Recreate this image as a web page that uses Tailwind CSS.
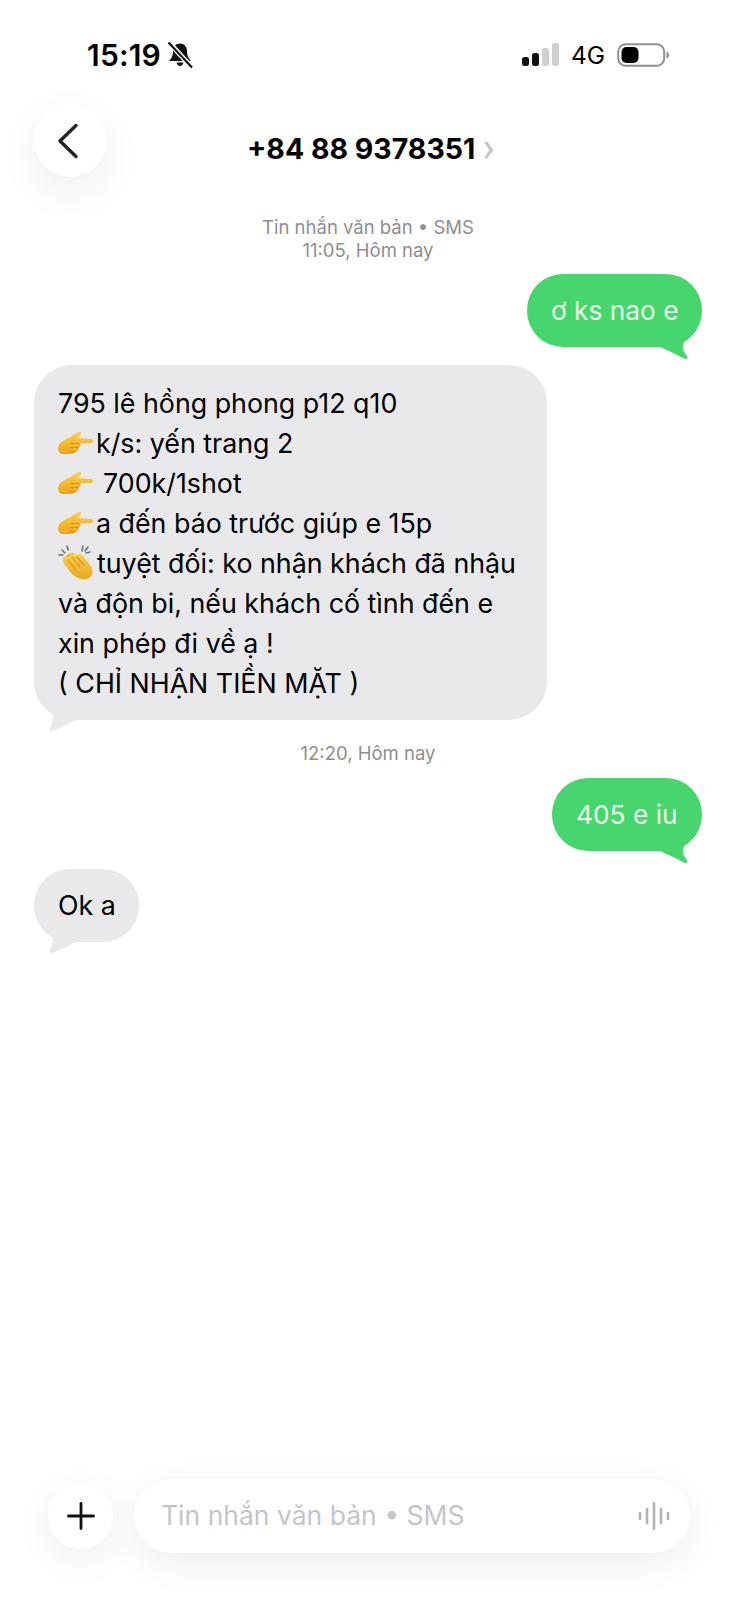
<!DOCTYPE html>
<html lang="vi">
<head>
<meta charset="utf-8">
<script src="https://cdn.jsdelivr.net/npm/@tailwindcss/browser@4"></script>
</head>
<body class="bg-white">
<div class="w-[736px] h-[1600px] flex flex-col overflow-hidden bg-white text-black font-['Inter','Liberation_Sans',sans-serif]">

  <!-- status bar -->
  <div class="h-[104px] pt-[38px] pl-[87px] pr-[67px] flex items-start justify-between shrink-0">
    <div class="flex items-center h-[34px] gap-[6px]">
      <span class="text-[30px] leading-[34px] font-semibold tracking-[0.2px]">15:19</span>
      <svg width="26" height="26" viewBox="0 0 26 26" fill="none">
        <path d="M13 1.500c-4.200 0-7 3.200-7 7.500 0 5-1.800 7.500-3.800 10h21.600c-2-2.500-3.800-5-3.800-10 0-4.300-2.800-7.500-7-7.500z" fill="#111"/>
        <path d="M9.500 20.500h7c-.4 2.200-1.800 3.500-3.500 3.500s-3.100-1.300-3.500-3.500z" fill="#111"/>
        <path d="M1.500 0 L25 25.500" stroke="#fff" stroke-width="5"/>
        <path d="M1.500 .5 L25 25.500" stroke="#111" stroke-width="2.200"/>
      </svg>
    </div>
    <div class="flex items-center h-[34px]">
      <svg width="38" height="26" viewBox="0 0 38 26" class="mr-[11px]">
        <rect x="0" y="15" width="7" height="9" rx="2.500" fill="#111"/>
        <rect x="10" y="11" width="7" height="13" rx="2.500" fill="#111"/>
        <rect x="20" y="6" width="7" height="18" rx="2.500" fill="#cfcfcf"/>
        <rect x="30" y="1" width="7" height="23" rx="2.500" fill="#cfcfcf"/>
      </svg>
      <span class="text-[24.500px] leading-[34px] font-normal mr-[12px]">4G</span>
      <svg width="52" height="26" viewBox="0 0 52 26">
        <rect x="1.200" y="2.200" width="46" height="21.600" rx="7.500" fill="#fff" stroke="#8f8f8f" stroke-width="2"/>
        <rect x="4.500" y="5" width="17" height="16" rx="5" fill="#000"/>
        <path d="M49.500 9.500c2 .6 2.500 2 2.500 3.500s-.5 2.900-2.500 3.500z" fill="#8f8f8f"/>
      </svg>
    </div>
  </div>

  <!-- header -->
  <div class="h-[104px] pl-[34px] flex items-start shrink-0">
    <button class="w-[73px] h-[73px] rounded-full bg-white flex items-center justify-center shadow-[0_14px_40px_rgba(0,0,0,0.07)]">
      <svg width="24" height="36" viewBox="0 0 24 36" fill="none" class="-translate-x-[3px]">
        <path d="M20 2.500 L4 18 L20 33.500" stroke="#222" stroke-width="3.400" stroke-linecap="round" stroke-linejoin="round"/>
      </svg>
    </button>
    <div class="ml-[140px] mt-[27px] flex items-center h-[36px]">
      <span class="text-[28.500px] leading-[36px] font-bold whitespace-nowrap">+84 88 9378351</span>
      <svg width="12" height="20" viewBox="0 0 12 20" fill="none" class="ml-[8px] mt-[2px]">
        <path d="M2.500 2 L8.500 10 L2.500 18" stroke="#c6c6c6" stroke-width="3.200" stroke-linejoin="round"/>
      </svg>
    </div>
  </div>

  <!-- messages -->
  <div class="px-[34px] flex flex-col">
    <div class="mt-[8px] text-center text-[18.500px] leading-[23px] text-[#8e8e93]">
      <div>Tin nhắn văn bản • SMS</div>
      <div>11:05, Hôm nay</div>
    </div>

    <div class="mt-[12px] self-end relative h-[73px] w-[175px] pl-[24px] rounded-[36px] bg-[#47d66d] flex items-center text-[26.300px] text-[#e9fbec] whitespace-nowrap">
      ơ ks nao e
      <svg width="30" height="28" viewBox="0 0 30 28" class="absolute left-[133px] top-[60px]"><path d="M0 13 Q12 18 23 24 Q28 27 27 22 Q22 16 23 12 L26 0 L0 0 Z" fill="#47d66d"/></svg>
    </div>

    <div class="mt-[18px] relative w-[513px] h-[355px] rounded-[38px] bg-[#e9e9eb] pt-[18px] pl-[24px] text-[26.800px] leading-[40px] whitespace-nowrap">
      <div>795 lê hồng phong p12 q10</div>
      <div class="flex items-center">
        <svg width="36" height="24" viewBox="0 0 36 24" class="mr-[2px]"><defs><linearGradient id="h" x1="0" y1="0" x2="0" y2="1"><stop offset="0" stop-color="#fbd04a"/><stop offset="1" stop-color="#eca71e"/></linearGradient></defs><path d="M0 17C1 11 6 9 11 7C14 5 18 2 21 1C23 .5 24 2.500 22.500 4L19 7L33 8C36 8.500 36 12 33 12L22 12.500C23 14 22.500 16 21 16.500C21 18 20 20 18 20.500C17 22 15 23 12 23L5 23C2 23 0 21 0 17Z" fill="url(#h)"/><path d="M12 12.500L22 12.500M12 16.500L21 16.500M11 20.500L18 20.500" stroke="#d8951a" stroke-width="1"/></svg>k/s: yến trang 2
      </div>
      <div class="flex items-center">
        <svg width="36" height="24" viewBox="0 0 36 24" class="mr-[9px]"><path d="M0 17C1 11 6 9 11 7C14 5 18 2 21 1C23 .5 24 2.500 22.500 4L19 7L33 8C36 8.500 36 12 33 12L22 12.500C23 14 22.500 16 21 16.500C21 18 20 20 18 20.500C17 22 15 23 12 23L5 23C2 23 0 21 0 17Z" fill="url(#h)"/><path d="M12 12.500L22 12.500M12 16.500L21 16.500M11 20.500L18 20.500" stroke="#d8951a" stroke-width="1"/></svg>700k/1shot
      </div>
      <div class="flex items-center">
        <svg width="36" height="24" viewBox="0 0 36 24" class="mr-[2px]"><path d="M0 17C1 11 6 9 11 7C14 5 18 2 21 1C23 .5 24 2.500 22.500 4L19 7L33 8C36 8.500 36 12 33 12L22 12.500C23 14 22.500 16 21 16.500C21 18 20 20 18 20.500C17 22 15 23 12 23L5 23C2 23 0 21 0 17Z" fill="url(#h)"/><path d="M12 12.500L22 12.500M12 16.500L21 16.500M11 20.500L18 20.500" stroke="#d8951a" stroke-width="1"/></svg>a đến báo trước giúp e 15p
      </div>
      <div class="flex items-center">
        <svg width="38" height="38" viewBox="0 0 38 38" class="mr-[1px]">
          <path d="M8 13 C10 9 15 8 18 11 L26 18 L30 24 L24 28 L12 22z" fill="#e9a21d"/>
          <path d="M5 16 C5 12 9 11 11 13 C12 9 16 9 18 11 C20 9 24 10 25 12 L32 21 C36 27 35 32 31 34 C26 37 18 34 13 29 L7 21 C5 19 5 18 5 16Z" fill="url(#h)"/>
          <path d="M10 16 L18 26 M14 13 L22 23 M19 13 L26 21" stroke="#d8951a" stroke-width="1.200" stroke-linecap="round"/>
          <path d="M4 6 L7 9 M9 2 L10 6 M1 11 L5 11 M25 2 L24 7 M30 3 L27 7 M32 8 L28 9" stroke="#66727d" stroke-width="1.500" stroke-linecap="round"/>
        </svg>tuyệt đối: ko nhận khách đã nhậu
      </div>
      <div>và độn bi, nếu khách cố tình đến e</div>
      <div>xin phép đi về ạ !</div>
      <div>( CHỈ NHẬN TIỀN MẶT )</div>
      <svg width="32" height="28" viewBox="0 0 32 28" class="absolute left-[12px] top-[340px]"><path d="M4 0 Q7 8 7 13 Q6 20 3 24 Q2.500 27 6 26 Q17 22 30 15 L30 0 Z" fill="#e9e9eb"/></svg>
    </div>

    <div class="mt-[22px] text-center text-[18.500px] leading-[23px] text-[#8e8e93]">12:20, Hôm nay</div>

    <div class="mt-[13px] self-end relative h-[73px] w-[150px] pl-[24px] rounded-[36px] bg-[#47d66d] flex items-center text-[26.300px] text-[#e9fbec] whitespace-nowrap">
      405 e iu
      <svg width="30" height="28" viewBox="0 0 30 28" class="absolute left-[108px] top-[60px]"><path d="M0 13 Q12 18 23 24 Q28 27 27 22 Q22 16 23 12 L26 0 L0 0 Z" fill="#47d66d"/></svg>
    </div>

    <div class="mt-[18px] self-start relative h-[73px] w-[105px] pl-[24px] rounded-[36px] bg-[#e9e9eb] flex items-center text-[26.800px] whitespace-nowrap">
      Ok a
      <svg width="32" height="28" viewBox="0 0 32 28" class="absolute left-[12px] top-[58px]"><path d="M4 0 Q7 8 7 13 Q6 20 3 24 Q2.500 27 6 26 Q17 22 30 15 L30 0 Z" fill="#e9e9eb"/></svg>
    </div>
  </div>

  <!-- composer -->
  <div class="mt-auto mb-[47px] pl-[48px] pr-[46px] flex items-center gap-[21px]">
    <button class="w-[65px] h-[66px] rounded-full bg-white flex items-center justify-center shadow-[0_10px_36px_rgba(0,0,0,0.07)] shrink-0">
      <svg width="28" height="28" viewBox="0 0 28 28"><path d="M14 1.500V26.500M1.500 14H26.500" stroke="#111" stroke-width="2.800" stroke-linecap="round"/></svg>
    </button>
    <div class="flex-1 h-[74px] rounded-[37px] bg-white flex items-center justify-between pl-[27px] pr-[20px] shadow-[0_10px_36px_rgba(0,0,0,0.07)]">
      <span class="text-[26.500px] text-[#c5c5c8] whitespace-nowrap">Tin nhắn văn bản • SMS</span>
      <svg width="32" height="28" viewBox="0 0 32 28"><path d="M2 11V17M9 7V21M16 1V27M23 7V21M30 11V17" stroke="#b3b3b6" stroke-width="2.600" stroke-linecap="round"/></svg>
    </div>
  </div>
</div>
</body>
</html>
